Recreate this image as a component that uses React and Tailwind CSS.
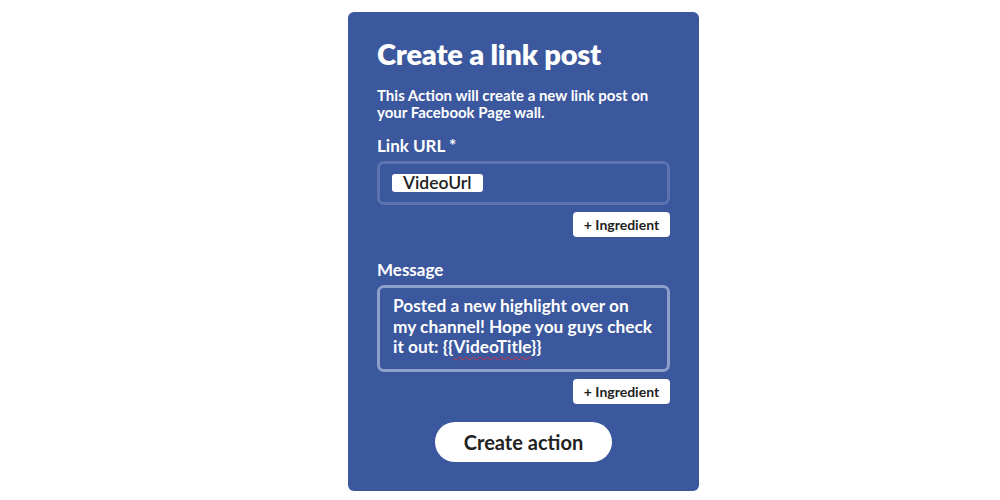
export default function App() {
  const font = { fontFamily: "Lato, 'Open Sans', sans-serif" };
  return (
    <div className="w-[1000px] h-[500px] bg-white flex" style={font}>
      <div className="ml-[348px] mt-[12px] w-[351px] h-[479px] bg-[#3b579d] rounded-[6px] px-[29px] pt-[24px] flex flex-col text-white">
        <h1 className="text-[29px] leading-[36px] font-extrabold tracking-[-0.2px]">Create a link post</h1>
        <p className="mt-[15px] text-[15px] leading-[17px] font-bold">This Action will create a new link post on your Facebook Page wall.</p>
        <div className="mt-[15px] text-[17px] leading-[20px] font-bold">Link URL *</div>
        <div className="mt-[5px] h-[44px] rounded-[7px] border-[3px] border-[#5d73af] flex items-center px-[12px]">
          <span className="bg-white text-[#222] rounded-[3px] text-[17.5px] leading-[18px] h-[18px] px-[11px] font-semibold">VideoUrl</span>
        </div>
        <div className="flex justify-end mt-[7px]">
          <button className="bg-white text-[#222] rounded-[4px] h-[25px] w-[97px] text-[14px] font-bold">+ Ingredient</button>
        </div>
        <div className="mt-[23px] text-[17px] leading-[20px] font-bold">Message</div>
        <div className="mt-[5px] h-[87px] rounded-[7px] border-[3px] border-[#8d9fcb] pl-[13px] pr-[6px] pt-[8px] text-[17.3px] leading-[20.5px] font-bold whitespace-nowrap">
          Posted a new highlight over on<br />my channel! Hope you guys check<br />it out: {"{{"}<span className="underline decoration-wavy decoration-[#d03040] decoration-[1px] underline-offset-[3px]">VideoTitle</span>{"}}"}
        </div>
        <div className="flex justify-end mt-[7px]">
          <button className="bg-white text-[#222] rounded-[4px] h-[25px] w-[97px] text-[14px] font-bold">+ Ingredient</button>
        </div>
        <div className="flex justify-center mt-[18px]">
          <button className="bg-white text-[#222] rounded-full h-[40px] w-[177px] text-[20px] font-bold">Create action</button>
        </div>
      </div>
    </div>
  );
}
